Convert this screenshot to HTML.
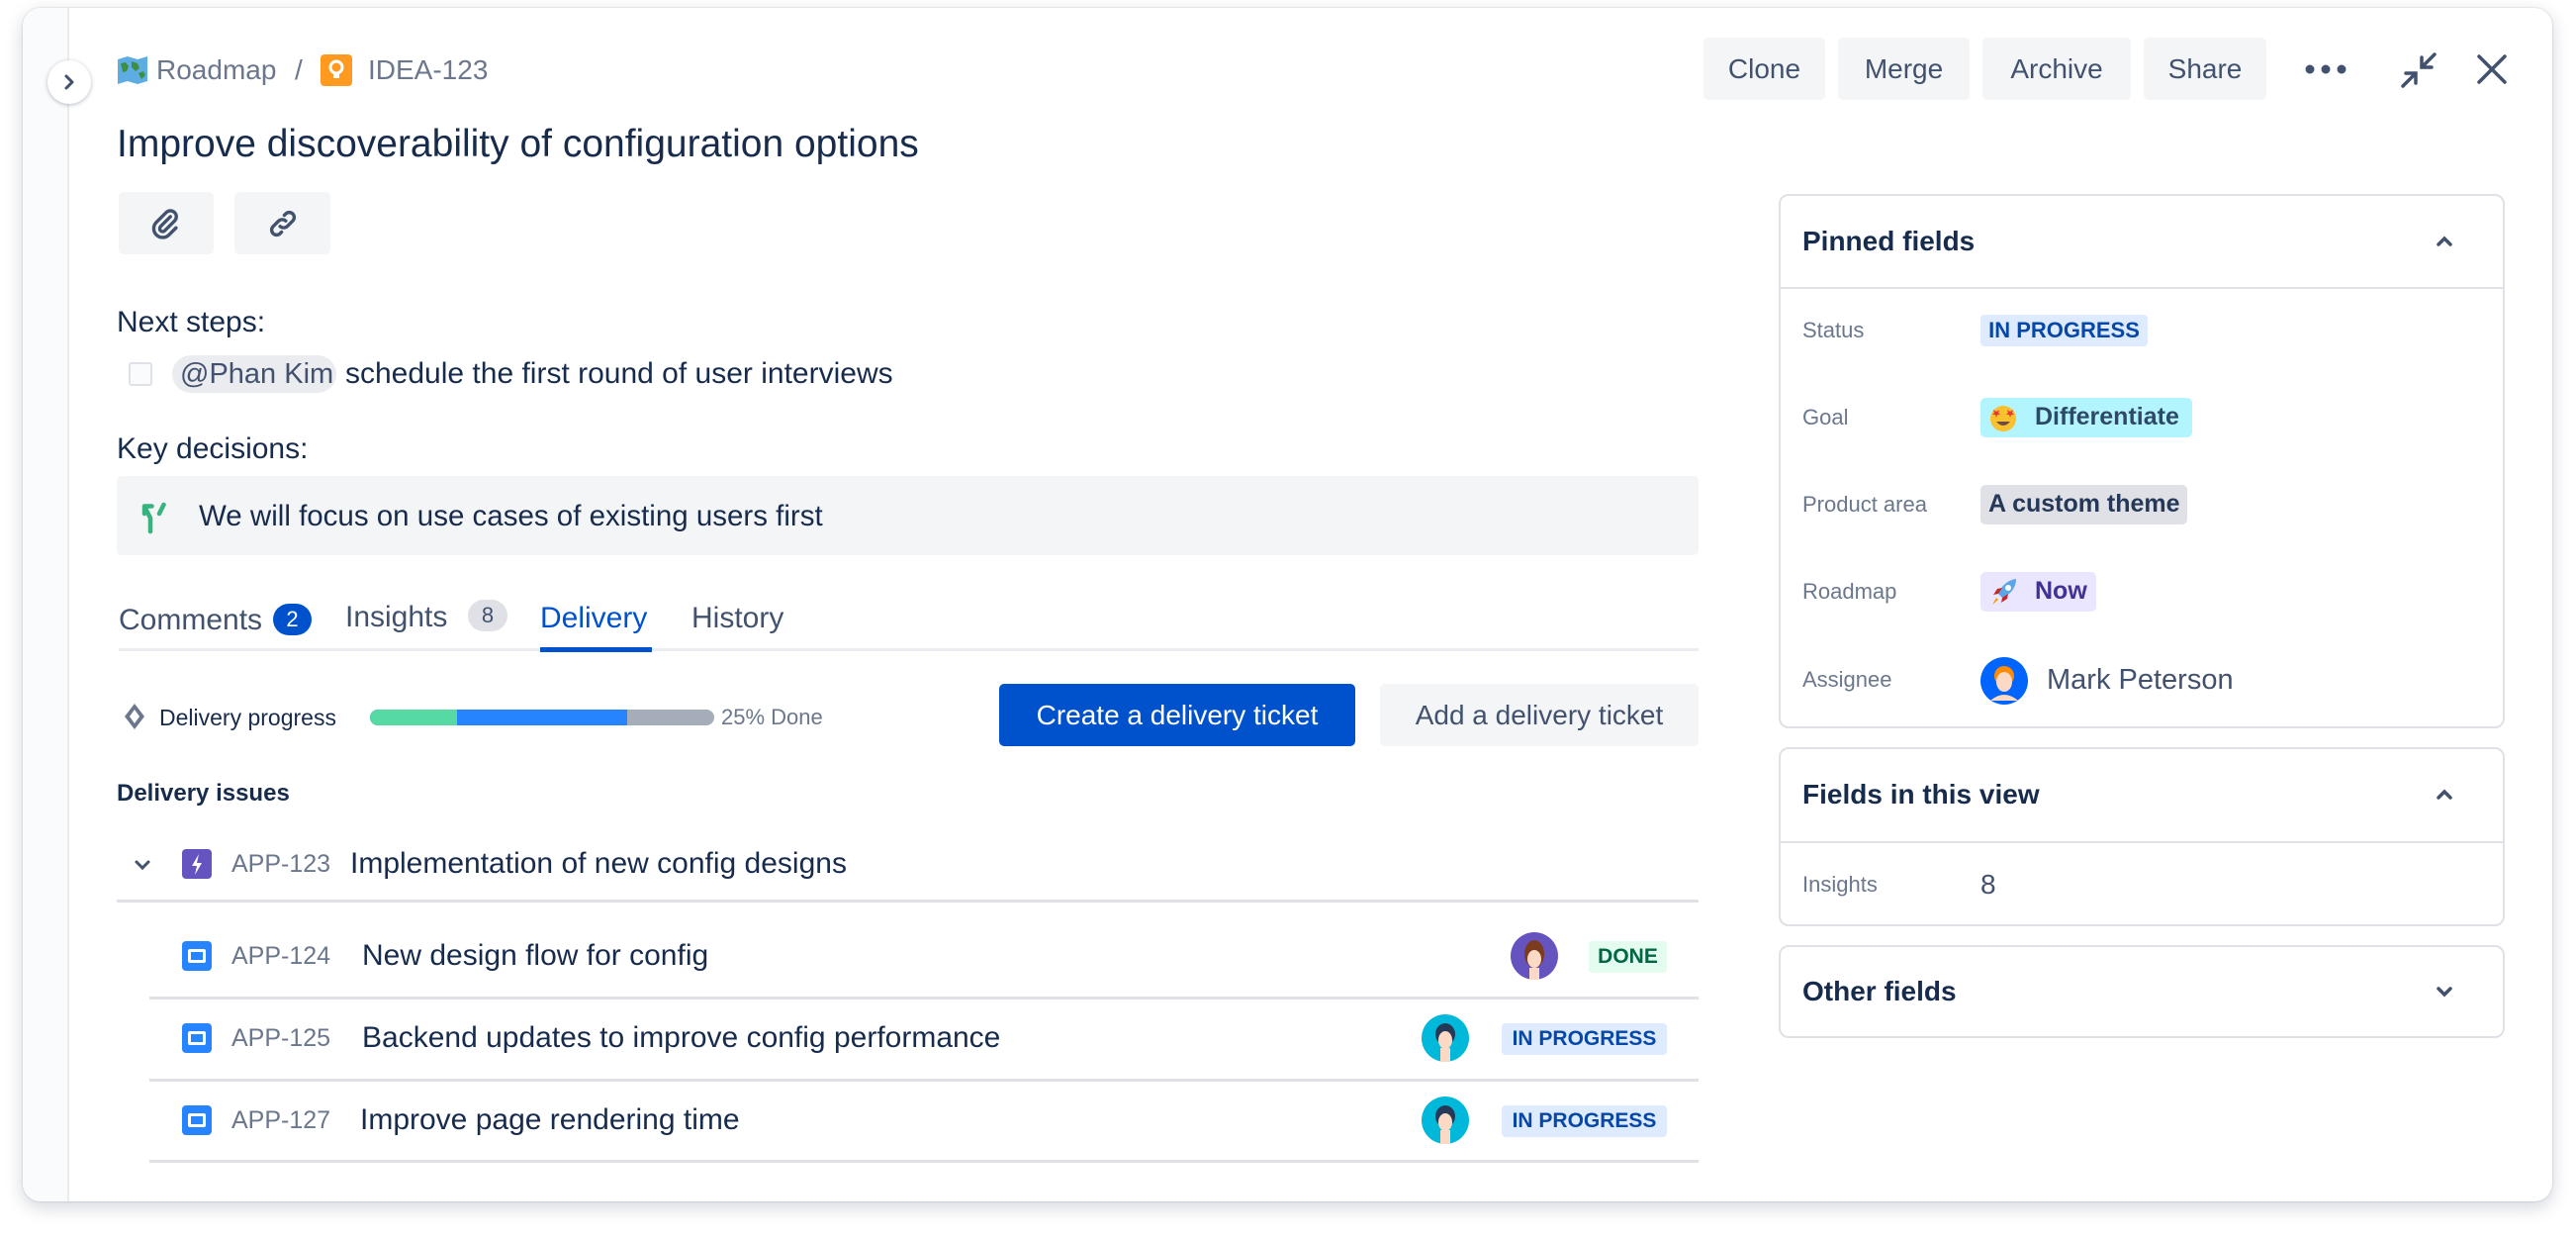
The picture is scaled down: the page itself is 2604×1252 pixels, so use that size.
<!DOCTYPE html>
<html><head><meta charset="utf-8">
<style>
*{margin:0;padding:0;box-sizing:border-box}
body{width:2604px;height:1252px;background:#fff;font-family:"Liberation Sans",sans-serif;color:#172b4d;position:relative;overflow:hidden}
.a{position:absolute}
.t{position:absolute;white-space:nowrap;line-height:40px;height:40px}
.btn{position:absolute;background:#f4f5f7;border-radius:5px;color:#42526e;font-size:28px;display:flex;align-items:center;justify-content:center}
.loz{position:absolute;border-radius:4px;font-size:21px;font-weight:bold;display:flex;align-items:center;justify-content:center;height:32px}
.lab{position:absolute;left:1822px;font-size:22px;color:#6b778c;line-height:30px;height:30px}
.panel{position:absolute;left:1798px;width:734px;border:2px solid #dfe1e6;border-radius:10px;background:#fff}
.ph{position:absolute;left:22px;font-size:28px;font-weight:bold;color:#172b4d;line-height:40px}
.div{position:absolute;height:2px;background:#dfe1e6}
</style></head><body>
<div class="a" style="left:23px;top:8px;width:2557px;height:1206px;border-radius:18px;background:#fff;box-shadow:0 6px 18px rgba(9,30,66,.18),0 0 2px rgba(9,30,66,.2)"></div>
<div class="a" style="left:23px;top:8px;width:47px;height:1206px;border-radius:18px 0 0 18px;background:#fafbfc;border-right:2px solid #ebecf0"></div>
<div class="a" style="left:48px;top:61px;width:44px;height:44px;border-radius:50%;background:#fff;box-shadow:0 1px 4px rgba(9,30,66,.3);display:flex;align-items:center;justify-content:center">
<svg width="18" height="18" viewBox="0 0 18 18"><path d="M6 3l6 6-6 6" fill="none" stroke="#42526e" stroke-width="3" stroke-linecap="round" stroke-linejoin="round"/></svg></div>

<!-- breadcrumb -->
<svg class="a" style="left:118px;top:56px" width="32" height="30" viewBox="0 0 32 30"><path d="M1 4l10-3 10 3 10-3v25l-10 3-10-3-10 3z" fill="#5dade2"/><path d="M4 8l5-1 3 4-2 5-4 1zM15 6l6 2 2 5-4 3-4-4zM22 18l5-2 2 4-4 4z" fill="#3e8e41"/></svg>
<div class="t" style="left:158px;top:51px;font-size:28px;color:#6b778c">Roadmap</div>
<div class="t" style="left:298px;top:51px;font-size:28px;color:#6b778c">/</div>
<div class="a" style="left:324px;top:55px;width:32px;height:32px;border-radius:4px;background:#ff991f;display:flex;align-items:center;justify-content:center">
<svg width="18" height="22" viewBox="0 0 18 22"><circle cx="9" cy="8" r="6" fill="none" stroke="#fff" stroke-width="3"/><rect x="6" y="14" width="6" height="5" fill="#fff"/></svg></div>
<div class="t" style="left:372px;top:51px;font-size:28px;color:#6b778c">IDEA-123</div>

<div class="t" style="left:118px;top:123px;font-size:39px;height:46px;line-height:46px;color:#172b4d">Improve discoverability of configuration options</div>

<div class="btn" style="left:120px;top:194px;width:96px;height:63px"><svg width="34" height="34" viewBox="0 0 24 24"><path d="M15 7l-7 7a2 2 0 003 3l7-7a4 4 0 00-6-6l-7 7a6 6 0 009 9l5-5" fill="none" stroke="#42526e" stroke-width="2.4" stroke-linecap="round"/></svg></div>
<div class="btn" style="left:237px;top:194px;width:97px;height:63px"><svg width="34" height="34" viewBox="0 0 24 24"><path d="M10 14a4 4 0 005 0l4-4a3.5 3.5 0 00-5-5l-1 1M14 10a4 4 0 00-5 0l-4 4a3.5 3.5 0 005 5l1-1" fill="none" stroke="#42526e" stroke-width="2.4" stroke-linecap="round"/></svg></div>

<div class="t" style="left:118px;top:306px;font-size:30px">Next steps:</div>
<div class="a" style="left:130px;top:366px;width:24px;height:24px;border:2px solid #dfe1e6;border-radius:3px;background:#fafbfc"></div>
<div class="a" style="left:174px;top:359px;width:166px;height:38px;border-radius:19px;background:#ebecf0"></div>
<div class="t" style="left:182px;top:358px;font-size:29px;color:#42526e">@Phan Kim</div>
<div class="t" style="left:349px;top:358px;font-size:30px">schedule the first round of user interviews</div>

<div class="t" style="left:118px;top:434px;font-size:30px">Key decisions:</div>
<div class="a" style="left:118px;top:481px;width:1599px;height:80px;background:#f4f5f7;border-radius:5px"></div>
<svg class="a" style="left:140px;top:504px" width="36" height="36" viewBox="0 0 24 24"><path d="M8 22V13L4 5M4 5h5M4 5v5M17 4l-3 6" fill="none" stroke="#36b37e" stroke-width="3" stroke-linecap="round"/></svg>
<div class="t" style="left:201px;top:502px;font-size:29.5px">We will focus on use cases of existing users first</div>

<!-- tabs -->
<div class="t" style="left:120px;top:607px;font-size:30px;color:#42526e">Comments</div>
<div class="a" style="left:276px;top:610px;width:39px;height:32px;border-radius:16px;background:#0052cc;color:#fff;font-size:22px;display:flex;align-items:center;justify-content:center">2</div>
<div class="t" style="left:349px;top:604px;font-size:30px;color:#42526e">Insights</div>
<div class="a" style="left:473px;top:606px;width:40px;height:32px;border-radius:16px;background:#dfe1e6;color:#42526e;font-size:22px;display:flex;align-items:center;justify-content:center">8</div>
<div class="t" style="left:546px;top:605px;font-size:30px;color:#0052cc">Delivery</div>
<div class="t" style="left:699px;top:605px;font-size:30px;color:#42526e">History</div>
<div class="div" style="left:120px;top:655px;width:1597px;height:3px;background:#ebecf0"></div>
<div class="a" style="left:546px;top:654px;width:113px;height:5px;background:#0052cc"></div>

<!-- delivery progress -->
<svg class="a" style="left:124px;top:710px" width="24" height="28" viewBox="0 0 24 28"><path d="M12 1l10 13-10 13L2 14z" fill="#6b778c"/><path d="M12 7l5 7-5 7-5-7z" fill="#fff"/></svg>
<div class="t" style="left:161px;top:705px;font-size:23px;color:#172b4d">Delivery progress</div>
<div class="a" style="left:374px;top:717px;width:348px;height:16px;border-radius:8px;background:#a5adba;overflow:hidden"><div class="a" style="left:0;top:0;width:260px;height:16px;background:#2684ff"></div><div class="a" style="left:0;top:0;width:88px;height:16px;background:#57d9a3"></div></div>
<div class="t" style="left:729px;top:705px;font-size:22px;color:#6b778c">25% Done</div>
<div class="a" style="left:1010px;top:691px;width:360px;height:63px;border-radius:5px;background:#0052cc;color:#fff;font-size:28px;display:flex;align-items:center;justify-content:center">Create a delivery ticket</div>
<div class="btn" style="left:1395px;top:691px;width:322px;height:63px">Add a delivery ticket</div>

<div class="t" style="left:118px;top:782px;font-size:24px;font-weight:bold">Delivery issues</div>

<svg class="a" style="left:134px;top:864px" width="20" height="20" viewBox="0 0 20 20"><path d="M4 7l6 6 6-6" fill="none" stroke="#42526e" stroke-width="3" stroke-linecap="round"/></svg>
<div class="a" style="left:184px;top:858px;width:30px;height:30px;border-radius:4px;background:#6554c0"><svg width="30" height="30" viewBox="0 0 30 30"><path d="M17 5l-7 12h5l-2 9 7-12h-5z" fill="#fff"/></svg></div>
<div class="t" style="left:234px;top:853px;font-size:25px;color:#6b778c">APP-123</div>
<div class="t" style="left:354px;top:853px;font-size:30px">Implementation of new config designs</div>
<div class="div" style="left:118px;top:909px;width:1599px;height:3px"></div>

<!-- rows -->
<div class="a" style="left:184px;top:951px;width:30px;height:30px;border-radius:4px;background:#2684ff"><div class="a" style="left:6px;top:8px;width:18px;height:14px;border:3px solid #fff;border-radius:2px"></div></div>
<div class="t" style="left:234px;top:946px;font-size:25px;color:#6b778c">APP-124</div>
<div class="t" style="left:366px;top:946px;font-size:30px">New design flow for config</div>
<svg class="a" style="left:1527px;top:942px" width="48" height="48" viewBox="0 0 48 48"><circle cx="24" cy="24" r="24" fill="#6554c0"/><ellipse cx="24" cy="22" rx="10" ry="14" fill="#7a3b1e"/><ellipse cx="24" cy="27" rx="7" ry="9" fill="#fcd9c4"/><rect x="19" y="36" width="10" height="12" fill="#fcd9c4"/></svg>
<div class="loz" style="left:1606px;top:951px;width:79px;background:#e3fcef;color:#006644">DONE</div>
<div class="div" style="left:151px;top:1007px;width:1566px;height:3px"></div>

<div class="a" style="left:184px;top:1034px;width:30px;height:30px;border-radius:4px;background:#2684ff"><div class="a" style="left:6px;top:8px;width:18px;height:14px;border:3px solid #fff;border-radius:2px"></div></div>
<div class="t" style="left:234px;top:1029px;font-size:25px;color:#6b778c">APP-125</div>
<div class="t" style="left:366px;top:1029px;font-size:30px">Backend updates to improve config performance</div>
<svg class="a" style="left:1437px;top:1025px" width="48" height="48" viewBox="0 0 48 48"><circle cx="24" cy="24" r="24" fill="#00b8d9"/><ellipse cx="24" cy="20" rx="10" ry="11" fill="#253858"/><ellipse cx="24" cy="26" rx="7" ry="9" fill="#fcd9c4"/><rect x="19" y="34" width="10" height="14" fill="#fcd9c4"/></svg>
<div class="loz" style="left:1518px;top:1034px;width:167px;background:#deebff;color:#0747a6">IN PROGRESS</div>
<div class="div" style="left:151px;top:1090px;width:1566px;height:3px"></div>

<div class="a" style="left:184px;top:1117px;width:30px;height:30px;border-radius:4px;background:#2684ff"><div class="a" style="left:6px;top:8px;width:18px;height:14px;border:3px solid #fff;border-radius:2px"></div></div>
<div class="t" style="left:234px;top:1112px;font-size:25px;color:#6b778c">APP-127</div>
<div class="t" style="left:364px;top:1112px;font-size:30px">Improve page rendering time</div>
<svg class="a" style="left:1437px;top:1108px" width="48" height="48" viewBox="0 0 48 48"><circle cx="24" cy="24" r="24" fill="#00b8d9"/><ellipse cx="24" cy="20" rx="10" ry="11" fill="#253858"/><ellipse cx="24" cy="26" rx="7" ry="9" fill="#fcd9c4"/><rect x="19" y="34" width="10" height="14" fill="#fcd9c4"/></svg>
<div class="loz" style="left:1518px;top:1117px;width:167px;background:#deebff;color:#0747a6">IN PROGRESS</div>
<div class="div" style="left:151px;top:1172px;width:1566px;height:3px"></div>

<!-- top right actions -->
<div class="btn" style="left:1722px;top:38px;width:123px;height:63px">Clone</div>
<div class="btn" style="left:1858px;top:38px;width:133px;height:63px">Merge</div>
<div class="btn" style="left:2004px;top:38px;width:150px;height:63px">Archive</div>
<div class="btn" style="left:2167px;top:38px;width:124px;height:63px">Share</div>
<svg class="a" style="left:2329px;top:60px" width="44" height="20" viewBox="0 0 44 20"><circle cx="6" cy="10" r="4.5" fill="#42526e"/><circle cx="22" cy="10" r="4.5" fill="#42526e"/><circle cx="38" cy="10" r="4.5" fill="#42526e"/></svg>
<svg class="a" style="left:2426px;top:52px" width="38" height="38" viewBox="0 0 38 38"><path d="M35 3L22 16M22 6v10h10M3 35l13-13M6 22h10v10" fill="none" stroke="#42526e" stroke-width="3.5" stroke-linecap="round"/></svg>
<svg class="a" style="left:2503px;top:54px" width="32" height="32" viewBox="0 0 32 32"><path d="M3 3l26 26M29 3L3 29" stroke="#42526e" stroke-width="3.5" stroke-linecap="round"/></svg>

<!-- Pinned fields -->
<div class="panel" style="top:196px;height:540px">
<div class="ph" style="top:26px">Pinned fields</div>
<svg class="a" style="left:660px;top:36px" width="22" height="20" viewBox="0 0 22 20"><path d="M5 13l6-6 6 6" fill="none" stroke="#42526e" stroke-width="3.5" stroke-linecap="round"/></svg>
<div class="div" style="left:0;top:92px;width:730px"></div>
</div>
<div class="lab" style="top:319px">Status</div>
<div class="loz" style="left:2002px;top:318px;width:169px;background:#deebff;color:#0747a6;font-size:22px">IN PROGRESS</div>
<div class="lab" style="top:407px">Goal</div>
<div class="a" style="left:2002px;top:402px;width:214px;height:40px;border-radius:5px;background:#b3f5ff"></div>
<svg class="a" style="left:2009px;top:406px" width="32" height="32" viewBox="0 0 32 32"><circle cx="16" cy="17" r="13" fill="#fbc02d"/><path d="M6 8l3 2 3-2-1 3 2 2h-3l-1 3-1-3H5l2-2zM20 8l3 2 3-2-1 3 2 2h-3l-1 3-1-3h-3l2-2z" fill="#e53935"/><path d="M9 20q7 8 14 0z" fill="#6d4c41"/></svg>
<div class="t" style="left:2057px;top:401px;font-size:25px;color:#172b4d;font-weight:bold;opacity:.85">Differentiate</div>
<div class="lab" style="top:495px">Product area</div>
<div class="a" style="left:2002px;top:490px;width:209px;height:40px;border-radius:5px;background:#dfe1e6"></div>
<div class="t" style="left:2010px;top:489px;font-size:25px;font-weight:bold;color:#253858">A custom theme</div>
<div class="lab" style="top:583px">Roadmap</div>
<div class="a" style="left:2002px;top:578px;width:117px;height:40px;border-radius:5px;background:#eae6ff"></div>
<svg class="a" style="left:2010px;top:582px" width="32" height="32" viewBox="0 0 32 32"><path d="M28 3C20 4 13 10 10 18l4 4c8-3 14-10 14-19z" fill="#5aa6e8"/><path d="M10 18l-5 1 4-6 5-1zM14 22l-1 5 6-4 1-5z" fill="#c62828"/><path d="M8 22l2 2-6 5z" fill="#ff9800"/><circle cx="20" cy="12" r="3" fill="#fff"/></svg>
<div class="t" style="left:2057px;top:577px;font-size:25px;font-weight:bold;color:#403294">Now</div>
<div class="lab" style="top:672px">Assignee</div>
<svg class="a" style="left:2002px;top:664px" width="48" height="48" viewBox="0 0 48 48"><circle cx="24" cy="24" r="24" fill="#0065ff"/><ellipse cx="24" cy="19" rx="10" ry="10" fill="#ff8b00"/><ellipse cx="24" cy="25" rx="8" ry="10" fill="#fcd9c4"/><path d="M10 44q14-12 28 0" fill="#fcd9c4"/></svg>
<div class="t" style="left:2069px;top:667px;font-size:29px;color:#42526e">Mark Peterson</div>

<!-- Fields in this view -->
<div class="panel" style="top:755px;height:181px">
<div class="ph" style="top:26px">Fields in this view</div>
<svg class="a" style="left:660px;top:36px" width="22" height="20" viewBox="0 0 22 20"><path d="M5 13l6-6 6 6" fill="none" stroke="#42526e" stroke-width="3.5" stroke-linecap="round"/></svg>
<div class="div" style="left:0;top:93px;width:730px"></div>
</div>
<div class="lab" style="top:879px">Insights</div>
<div class="t" style="left:2002px;top:874px;font-size:28px;color:#42526e">8</div>

<!-- Other fields -->
<div class="panel" style="top:955px;height:94px">
<div class="ph" style="top:25px">Other fields</div>
<svg class="a" style="left:660px;top:35px" width="22" height="20" viewBox="0 0 22 20"><path d="M5 7l6 6 6-6" fill="none" stroke="#42526e" stroke-width="3.5" stroke-linecap="round"/></svg>
</div>
</body></html>
